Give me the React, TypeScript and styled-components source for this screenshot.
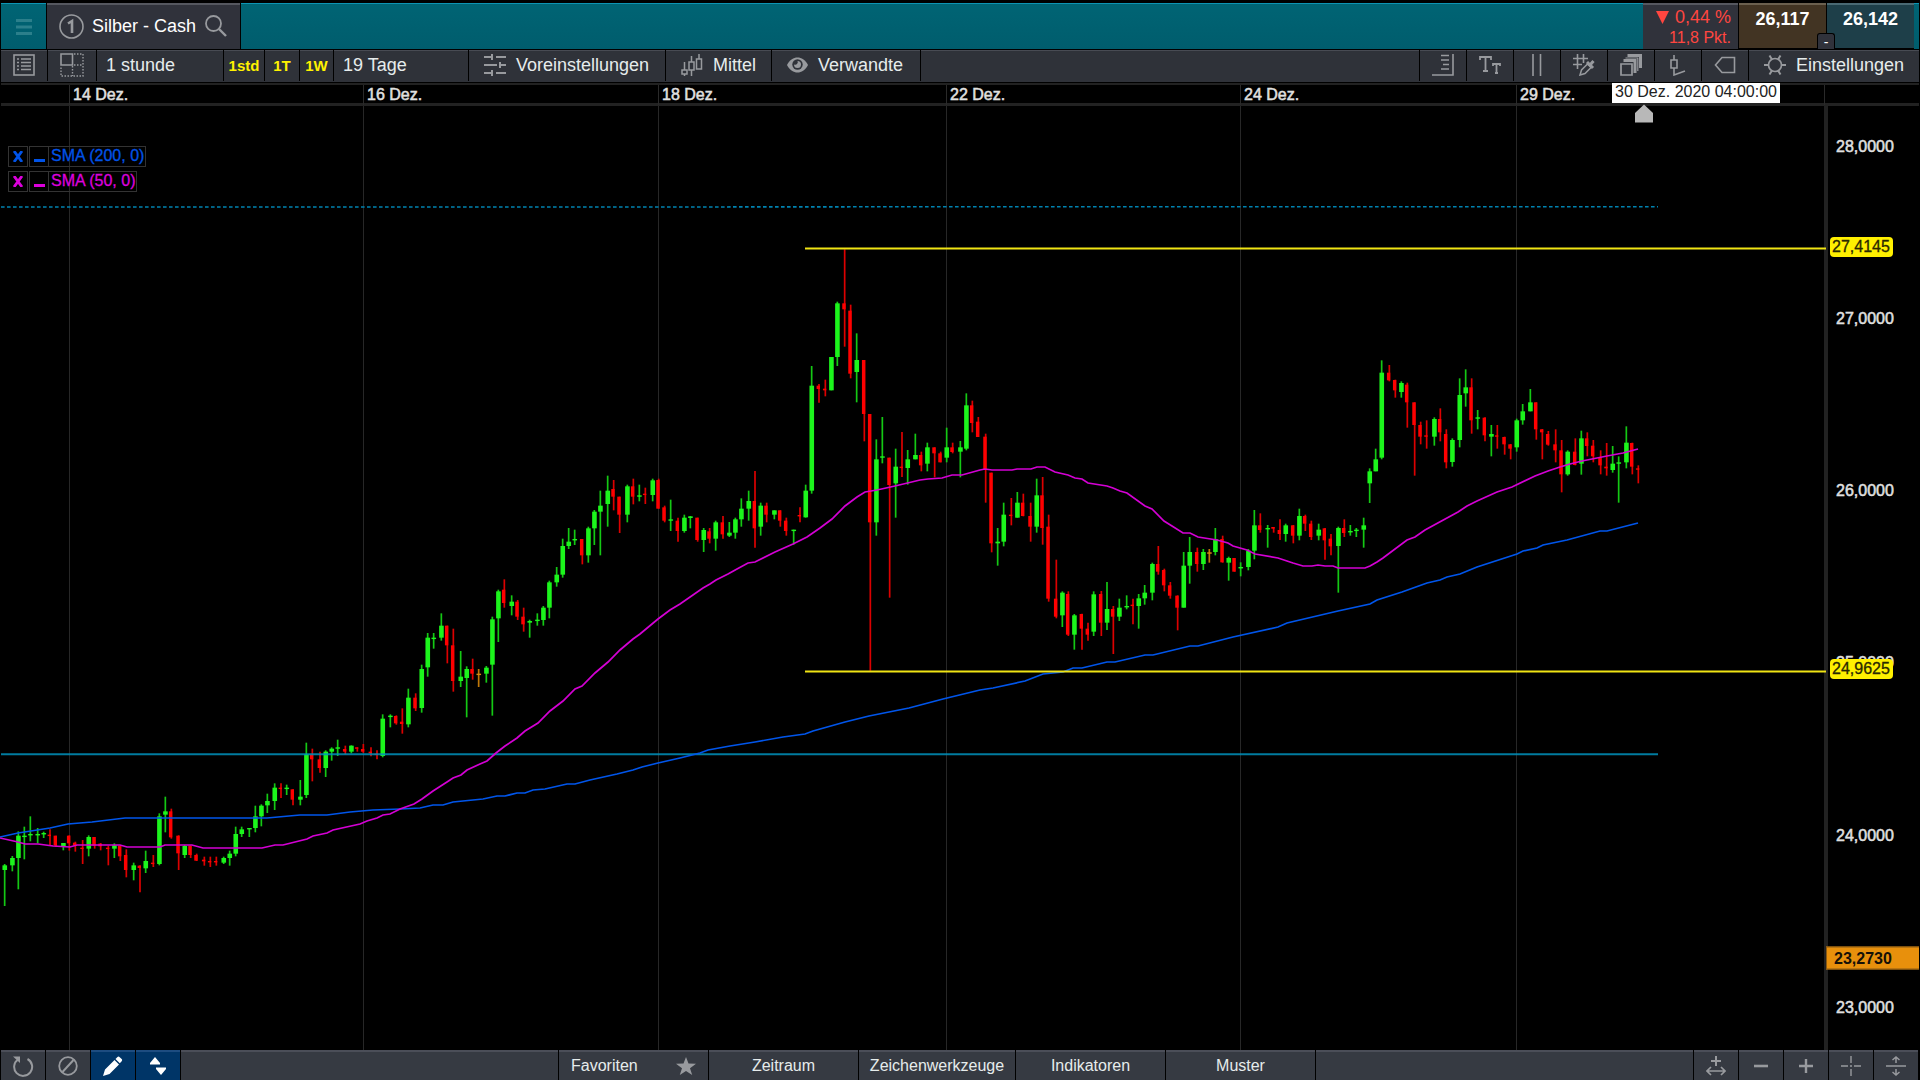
import React from "react";
import styled, { createGlobalStyle } from "styled-components";

const GlobalStyle = createGlobalStyle`
  * { box-sizing: border-box; }
  body { margin: 0; background: #000; }
  button, select { font: inherit; color: inherit; }
`;

const Screen = styled.div`
  display: flex;
  flex-direction: column;
  height: 100vh;
  padding: 0 1px;
  background: #000;
  color: #e6ecec;
  font-family: "Liberation Sans", Arial, sans-serif;
  font-size: 18px;
`;

/* ---------- header ---------- */

const Header = styled.header`
  display: flex;
  height: 49px;
  padding-top: 3px;
  background: #000;
`;

const HeaderFill = styled.div<{ $width?: number }>`
  flex: ${(p) => (p.$width ? `0 0 ${p.$width}px` : "1")};
  border-top: 1px solid #0d94b4;
  background: linear-gradient(#006474, #005d6d);
`;

const MenuButton = styled.button`
  flex: 0 0 45px;
  display: flex;
  align-items: center;
  justify-content: center;
  border: 0;
  border-top: 1px solid #0d94b4;
  padding: 0;
  background: linear-gradient(#006474, #005d6d);
`;

const Tab = styled.div`
  display: flex;
  align-items: center;
  gap: 8px;
  flex: 0 0 195px;
  padding: 0 13px 0 12px;
  border: solid #000;
  border-width: 0 1px;
  background: #30323b;
  box-shadow: inset 0 2px #55575f;
  color: #fff;
`;

const TabTitle = styled.h1`
  margin: 0;
  flex: 1;
  font-size: 18px;
  font-weight: 400;
  white-space: nowrap;
`;

const BareButton = styled.button`
  display: flex;
  padding: 0;
  border: 0;
  background: none;
`;

const Change = styled.div`
  flex: 0 0 95px;
  display: flex;
  flex-direction: column;
  align-items: flex-end;
  gap: 1px;
  padding: 4px 7px 0 0;
  background: #30323b;
  box-shadow: inset 0 2px #55575f;
  color: #ff4640;
  line-height: 20px;
`;

const ChangeRow = styled.span<{ $small?: boolean }>`
  display: flex;
  align-items: center;
  gap: 6px;
  font-size: ${(p) => (p.$small ? 16 : 18)}px;
`;

const Quotes = styled.div`
  position: relative;
  display: flex;
  gap: 1px;
  flex: 0 0 176px;
  padding: 0 0 1px 1px;
  background: #000;
`;

const Quote = styled.button<{ $tone: string; $edge: string }>`
  flex: 1;
  padding: 0 0 12px;
  border: 0;
  background: ${(p) => p.$tone};
  box-shadow: inset 0 2px ${(p) => p.$edge};
  color: #fff;
  font-weight: 700;
`;

const Spread = styled.span`
  position: absolute;
  left: 50%;
  bottom: 0;
  width: 18px;
  height: 16px;
  margin-left: -9px;
  border: 1px solid #000;
  border-bottom: 0;
  border-radius: 3px 3px 0 0;
  background: #30323b;
  color: #fff;
  font-size: 14px;
  line-height: 17px;
  text-align: center;
`;

/* ---------- toolbar ---------- */

const Toolbar = styled.nav`
  display: flex;
  height: 33px;
  margin-top: 1px;
  border-bottom: 1px solid #000;
  background: #2f3239;
  box-shadow: inset 0 1px #484b53;
`;

const Tool = styled.button<{ $width: number; $side?: "left" | "right" }>`
  flex: 0 0 ${(p) => p.$width}px;
  display: flex;
  align-items: center;
  gap: 10px;
  height: 31px;
  padding: 0 15px 1px;
  border: 0 solid #000;
  border-${(p) => p.$side ?? "right"}-width: 1px;
  background: none;
  white-space: nowrap;
`;

const IconTool = styled(Tool)`
  justify-content: center;
  padding: 0 0 2px;
`;

const Shortcut = styled(IconTool)`
  padding: 0;
  color: #fff200;
  font-size: 15px;
  font-weight: 700;
`;

const Picker = styled.select<{ $width: number }>`
  flex: 0 0 ${(p) => p.$width}px;
  height: 31px;
  padding: 0 9px 2px;
  border: 0 solid #000;
  border-right-width: 1px;
  border-radius: 0;
  background: none;
  appearance: none;
`;

const Spacer = styled.div`
  flex: 1;
`;

/* ---------- chart ---------- */

const DateRow = styled.div`
  position: relative;
  display: grid;
  grid-template-columns: 68fr 294fr 295fr 288fr 294fr 276fr 308fr 95px;
  height: 23px;
  border: solid #222;
  border-width: 2px 0 3px;
  color: #e0e0e0;
  font-size: 16px;
  line-height: 20px;
`;

const DateCell = styled.div`
  padding-left: 3px;
  white-space: nowrap;
  -webkit-text-stroke: 0.5px #e0e0e0;
  & + & {
    border-left: 1px solid #2a2a2a;
  }
`;

const DateFlag = styled.time`
  position: absolute;
  z-index: 1;
  top: -2px;
  right: 139px;
  width: 168px;
  height: 20px;
  background: #fff;
  color: #222;
  line-height: 18px;
  text-align: center;
`;

const ChartArea = styled.main`
  flex: 1;
  min-height: 0;
  display: grid;
  grid-template: minmax(0, 1fr) / minmax(0, 1fr) 91px;
`;

const Plot = styled.section`
  position: relative;
  border-right: 4px solid #222;
`;

const Drawing = styled.svg`
  display: block;
  width: 100%;
  height: 100%;
  overflow: visible;
`;

const Legend = styled.ul`
  position: absolute;
  top: 40px;
  left: 7px;
  display: flex;
  flex-direction: column;
  align-items: flex-start;
  gap: 4px;
  margin: 0;
  padding: 0;
  list-style: none;
  font-size: 16px;
`;

const LegendItem = styled.li<{ $color: string }>`
  display: flex;
  height: 21px;
  color: ${(p) => p.$color};
`;

const LegendButton = styled.button`
  display: flex;
  align-items: center;
  justify-content: center;
  width: 20px;
  margin-right: 1px;
  padding: 0;
  border: 1px solid #333;
  background: none;
  & + & {
    margin-right: -1px;
  }
`;

const LegendName = styled.span`
  padding: 0 1px 0 2px;
  border: 1px solid #333;
  line-height: 18px;
  -webkit-text-stroke: 0.3px currentColor;
`;

const PriceAxis = styled.aside`
  position: relative;
  font-size: 16px;
  color: #e0e0e0;
`;

const PriceLabel = styled.span`
  position: absolute;
  left: 8px;
  line-height: 20px;
  transform: translateY(-50%);
  -webkit-text-stroke: 0.5px #e0e0e0;
`;

const LevelTag = styled.span`
  position: absolute;
  left: 2px;
  margin-top: -1px;
  padding: 0 3px 0 2px;
  border-radius: 4px;
  background: #fff000;
  color: #2a2800;
  line-height: 20px;
  transform: translateY(-50%);
  -webkit-text-stroke: 0.3px #2a2800;
`;

const LastPriceTag = styled.span`
  position: absolute;
  left: -2px;
  right: 0;
  margin-top: -3px;
  padding-left: 7px;
  border: 1px solid #8a5a14;
  border-right: 0;
  background: #e8900c;
  color: #151008;
  font-weight: 700;
  line-height: 21px;
  transform: translateY(-50%);
`;

/* ---------- footer ---------- */

const Footer = styled.footer`
  display: flex;
  height: 30px;
  background: #363a42;
  box-shadow: inset 0 2px #4b4e58;
  font-size: 16px;
`;

const FootIcon = styled.button<{ $active?: boolean }>`
  flex: 0 0 45px;
  display: flex;
  align-items: center;
  justify-content: center;
  padding: 2px 0 0;
  border: 0;
  border-right: 1px solid #000;
  background: ${(p) => (p.$active ? "#003567" : "none")};
  box-shadow: ${(p) => (p.$active ? "inset 0 2px #1d4c80" : "none")};
`;

const FootGroup = styled.div`
  display: flex;
  border-left: 1px solid #000;
`;

const FootTab = styled.button<{ $wide?: boolean; $spread?: boolean }>`
  display: flex;
  align-items: center;
  justify-content: ${(p) => (p.$spread ? "space-between" : "center")};
  width: ${(p) => (p.$wide ? 157 : 150)}px;
  padding: 2px 12px 0;
  border: 0;
  border-right: 1px solid #000;
  background: none;
`;

/* ---------- icons ---------- */

const Glyph = styled.svg`
  flex: none;
  display: block;
  fill: none;
  stroke: #989a9e;
  stroke-width: 2;
`;

const MenuIcon = () => (
  <Glyph width="16" height="16" viewBox="0 0 16 16">
    <path d="M0 1.500h16M0 8h16M0 14.500h16" strokeWidth="3" stroke="#2b7f8b" />
  </Glyph>
);
const OneIcon = () => (
  <Glyph width="25" height="25" viewBox="0 0 25 25">
    <circle cx="12.500" cy="12.500" r="11.500" strokeWidth="1.600" />
    <path d="M9 9.500 13 7v12" strokeWidth="2.600" />
  </Glyph>
);
const SearchIcon = () => (
  <Glyph width="22" height="22" viewBox="0 0 22 22">
    <circle cx="8.500" cy="8.500" r="7.500" strokeWidth="1.800" />
    <path d="m14 14 7 7" strokeWidth="2.400" />
  </Glyph>
);
const ListIcon = () => (
  <Glyph width="22" height="22" viewBox="0 0 22 22">
    <rect x="1" y="1" width="20" height="20" strokeWidth="1.600" />
    <path d="M4 5h2M4 8.500h2M4 12h2M4 15.500h2M8 5h10M8 8.500h10M8 12h10M8 15.500h10" strokeWidth="1.500" />
  </Glyph>
);
const GridIcon = () => (
  <Glyph width="24" height="24" viewBox="0 0 24 24">
    <path d="M1 1h11.500v11H1z" strokeWidth="1.600" />
    <path d="M14 1h9v22H1V13M12.500 13v10M14 12h9" strokeWidth="1.400" strokeDasharray="1.500 1.500" />
  </Glyph>
);
const SlidersIcon = () => (
  <Glyph width="22" height="22" viewBox="0 0 22 22">
    <path d="M0 3h9M12 3h10M8 0v6M0 11h13M16 11h6M16 8v6M0 19h9M12 19h10M8 16v6" />
  </Glyph>
);
const CandlesIcon = () => (
  <Glyph width="22" height="22" viewBox="0 0 22 22">
    <path d="M3.500 8v8M1 16h5v4H1zM3.500 20v2M10.500 2v6M8 8h5v8H8zM10.500 16v6M18 0v5M15.500 5h5v10h-5z" strokeWidth="1.500" />
  </Glyph>
);
const EyeIcon = () => (
  <Glyph width="21" height="16" viewBox="0 0 21 16">
    <path d="M0 8C3 2.500 6.500.5 10.500.5S18 2.500 21 8c-3 5.500-6.500 7.500-10.500 7.500S3 13.500 0 8z" fill="#989a9e" stroke="none" />
    <circle cx="10.500" cy="7.500" r="5.200" fill="#2f3239" stroke="none" />
    <path d="M10.500 4a3.500 3.500 0 1 1-3.500 3.500 2.600 2.600 0 0 0 3.500-3.500z" fill="#989a9e" stroke="none" />
  </Glyph>
);
const ScaleIcon = () => (
  <Glyph width="22" height="22" viewBox="0 0 22 22">
    <path d="M0 21h21V0M9 1.500h8M9 6h8M11 10.500h6M9 15h8" strokeWidth="1.600" />
  </Glyph>
);
const TextIcon = () => (
  <Glyph width="22" height="20" viewBox="0 0 22 20">
    <path d="M1 5V2h11v3M6.500 2v14M4 16h5M14 11V9h7v2M17.500 9v9M16 18h3" strokeWidth="1.800" />
  </Glyph>
);
const BarsIcon = () => (
  <Glyph width="10" height="22" viewBox="0 0 10 22">
    <path d="M1 0v22M8.500 0v22" strokeWidth="1.600" />
  </Glyph>
);
const GridPenIcon = () => (
  <Glyph width="22" height="22" viewBox="0 0 22 22">
    <path d="M4.500 0v15M10.500 0v9M0 4.500h15M0 10.500h9" strokeWidth="1.600" />
    <path d="m7 21 1.500-5 6-6 3.500 3.500-6 6z" strokeWidth="1.500" />
    <path d="m14 8 6 6M17 11l3.500-4" strokeWidth="3" />
  </Glyph>
);
const LayersIcon = () => (
  <Glyph width="22" height="22" viewBox="0 0 22 22">
    <path d="M1 10h11v11H1z" strokeWidth="1.700" />
    <path d="M3.500 6.500h11.500V19M7.500 1.500h13V14" strokeWidth="3" />
    <path d="M5.500 4h12.300V17" strokeWidth="1.200" />
  </Glyph>
);
const CandleAxisIcon = () => (
  <Glyph width="16" height="22" viewBox="0 0 16 22">
    <path d="M4 1v5M1 6h6v8H1zM4 14v7l11-4" strokeWidth="1.600" />
  </Glyph>
);
const TagIcon = () => (
  <Glyph width="22" height="18" viewBox="0 0 22 18">
    <path d="M8 1.500h12.500v15H8L1.500 9z" strokeWidth="1.600" />
  </Glyph>
);
const GearIcon = () => (
  <Glyph width="22" height="22" viewBox="0 0 22 22">
    <circle cx="11" cy="11" r="6.500" strokeWidth="1.700" />
    <path d="M0 11h4M18 11h4M5.500 1.500 8 5.500M16.500 1.500 14 5.500M5.500 20.500 8 16.500M16.500 20.500 14 16.500" />
  </Glyph>
);
const ResetIcon = () => (
  <Glyph width="22" height="22" viewBox="0 0 22 22">
    <path d="M6 4.500A9 9 0 1 0 15.500 4" />
    <path d="M1 1.500h7v6.500z" fill="#989a9e" stroke="none" />
  </Glyph>
);
const BanIcon = () => (
  <Glyph width="20" height="20" viewBox="0 0 20 20">
    <circle cx="10" cy="10" r="8.800" strokeWidth="1.800" />
    <path d="M15.500 4 4.500 16" />
  </Glyph>
);
const PencilIcon = () => (
  <Glyph width="20" height="20" viewBox="0 0 20 20">
    <path d="m0 20 2-6.500L11.500 4l4.500 4.500L6.500 18zM12.500 3l2-2q1-1 2.500.5L18.700 3q1 1 0 2.200l-1.900 2z" fill="#fff" stroke="none" />
  </Glyph>
);
const UpDownIcon = () => (
  <Glyph width="16" height="18" viewBox="0 0 16 18">
    <path d="M0 6 5 0l5 6v1.500H0zM6 10.500h10V12l-5 6-5-6z" fill="#fff" stroke="none" />
  </Glyph>
);
const StarIcon = () => (
  <Glyph width="20" height="18" viewBox="0 0 20 18">
    <path d="m10 0 2.500 6.500 7.500.3-6 4.500L16.200 18 10 14l-6.200 4L6 11.300 0 6.800l7.500-.3z" fill="#989a9e" stroke="none" />
  </Glyph>
);
const StretchIcon = () => (
  <Glyph width="20" height="20" viewBox="0 0 20 20">
    <path d="M10 0v10M5 5h10" />
    <path d="M1 15h18M5 11l-4 4 4 4M15 11l4 4-4 4" strokeWidth="1.700" />
  </Glyph>
);
const MinusIcon = () => (
  <Glyph width="14" height="14" viewBox="0 0 14 14">
    <path d="M0 7h14" strokeWidth="2.600" />
  </Glyph>
);
const PlusIcon = () => (
  <Glyph width="14" height="14" viewBox="0 0 14 14">
    <path d="M0 7h14M7 0v14" strokeWidth="2.400" />
  </Glyph>
);
const CrossIcon = () => (
  <Glyph width="20" height="20" viewBox="0 0 20 20">
    <path d="M0 10h7M13 10h7M10 0v7M10 13v7M9 10h2" strokeWidth="1.400" />
  </Glyph>
);
const SplitIcon = () => (
  <Glyph width="20" height="20" viewBox="0 0 20 20">
    <path d="M0 10h20M10 7V1M6.500 4 10 1l3.500 3M10 13v6M6.500 16l3.500 3 3.500-3" strokeWidth="1.500" />
  </Glyph>
);

/* ---------- market data ---------- */

const TOP = 106;
const WIDTH = 1823;
const HEIGHT = 944;

// Each block: horizontal base, vertical base, then rows of
// "kind time high low bodyTop bodyBottom" in thirds of a chart unit.
const blocks: [number, number, string][] = [
  [0, 580, `G 14 852 978 856 870;G 37 828 874 834 856;G 55 754 928 767 834;G 73 740 838 767 770;G 91 709 784 762 765;G 113 744 790 762 765;G 131 755 774 759 763;R 150 748 796 764 766;R 168 767 800 767 797;G 190 789 811 789 799;R 208 766 812 767 790;R 226 785 815 788 797;R 248 780 852 803 806;G 266 766 829 771 806;R 284 771 806 771 797;R 302 789 811 791 799;R 325 797 856 803 806;G 343 790 834 796 806;R 361 797 843 797 829;R 379 808 892 825 870;G 401 848 901 856 870;R 420 856 937 857 864;G 437 812 879 843 865;R 460 825 861 848 852;G 478 700 856 709 852;G 496 650 757 694 704;R 514 686 776 694 772;R 536 766 870 767 820;G 554 795 834 798 825;R 572 797 834 797 825;R 590 821 843 825 842;R 613 830 857 839 844;R 631 830 861 843 847;R 649 830 857 843 846;G 671 830 852 834 848;G 689 812 857 821 834;G 707 740 829 762 821;G 725 740 771 748 762;G 748 744 771 744 748;G 766 677 757 709 744;G 784 673 739 677 709;G 802 641 699 663 676;G 824 610 690 623 663;R 843 610 654 623 626;G 860 614 645 623 627;R 879 628 676 628 659;G 901 600 676 650 659;G 919 488 654 523 645;R 937 506 604 524 538;R 960 515 578 538 564;G 977 511 591 515 564;G 995 502 542 506 515;G 1013 479 528 502 506;R 1036 497 523 507 515;G 1054 496 520 497 515;R 1072 502 515 502 505;R 1090 492 519 507 515;R 1113 502 529 515 520;R 1131 511 538 521 524;G 1148 403 532 416 528;G 1171 403 442 407 411;R 1189 406 434 408 430;R 1207 385 461 425 432;G 1225 326 442 353 433;R 1247 340 393 353 385`],
  [380, 440, `G 125 674 818 687 804;G 143 579 710 593 682;G 161 579 626 593 597;G 184 520 602 557 593;R 202 557 670 557 616;R 220 566 755 616 723;G 242 633 741 710 723;G 260 679 832 687 714;R 278 656 719 687 701;O 296 687 741 701 705;G 319 678 728 683 701;G 337 530 827 538 674;G 355 449 606 454 535;R 373 418 503 449 489;G 395 466 526 485 498;R 413 480 540 485 530;R 431 503 575 530 553;G 449 539 593 543 548;G 472 520 557 539 543;G 490 498 557 503 540;G 508 422 535 427 503;G 530 381 440 404 427;G 548 296 413 318 404;G 566 264 327 305 318;G 584 269 315 297 301;R 607 297 373 297 346;G 625 260 368 265 346;G 643 210 315 215 265;G 661 152 346 197 215;G 683 107 260 152 192;R 701 120 211 147 170;R 719 170 279 170 224;G 742 134 247 139 224;R 760 116 193 139 170;G 778 134 184 166 170;R 796 143 192 161 165;G 818 116 184 121 165;R 836 116 206 120 206;R 854 197 247 202 242;G 872 179 273 238 241;R 894 233 305 242 273;G 913 224 278 233 273;G 931 228 265 229 234;R 953 233 305 233 300;G 971 264 336 270 300;R 989 264 310 274 296;G 1007 242 332 247 296;R 1029 228 296 247 283;G 1048 246 291 278 287;G 1066 233 296 238 278;G 1084 175 260 206 238;G 1106 152 242 183 206;R 1125 93 323 183 265;G 1142 188 287 197 260;R 1160 188 247 197 224;G 1183 211 238 211 224;R 1201 211 260 211 242;R 1219 233 287 242 273;G 1241 269 314 269 273;R 1260 202 247 225 229;G 1277 134 233 152 232`],
  [780, 230, `G 95 408 791 467 782;R 117 462 518 467 477;R 136 449 499 476 481;G 154 381 481 381 481;G 172 215 408 220 381;R 194 58 350 220 238;R 212 224 445 242 431;G 230 310 517 390 426;R 253 390 634 390 552;R 271 552 1322 552 877;G 289 628 917 688 877;G 307 561 700 679 683;R 329 683 1103 683 765;G 347 656 863 710 760;R 366 606 741 710 714;G 383 660 764 688 714;G 406 611 688 675 688;R 424 665 724 675 706;G 442 638 724 652 701;R 464 652 742 652 670;R 482 665 697 670 697;G 500 593 697 652 683;R 518 638 670 652 666;G 541 633 742 652 665;G 559 490 661 526 656;R 577 512 607 526 579;R 595 561 621 575 621;R 617 611 818 620 720;R 635 728 967 728 940;G 653 894 1007 935 940;G 671 818 949 854 935;R 694 804 886 854 858;G 712 786 863 818 863;R 730 791 859 818 858;R 752 818 935 858 890;G 770 746 908 796 890;R 788 741 944 796 894;R 806 854 1115 890 1106;R 829 989 1165 1106 1160;G 847 1084 1191 1088 1156;R 865 1084 1218 1092 1214;G 883 1152 1259 1156 1214;R 906 1151 1259 1152 1196;R 924 1178 1232 1196 1214;G 941 1084 1218 1093 1205`],
  [1000, 440, `R 304 453 588 462 548;G 321 426 570 507 548;R 340 498 642 507 530;G 358 476 543 503 530;G 380 466 508 498 502;R 399 476 553 494 498;G 416 462 566 475 498;G 434 435 494 458 475;G 457 368 481 372 458;R 475 318 404 372 395;R 493 386 454 390 436;R 511 426 476 436 467;R 533 466 571 467 503;G 551 336 503 377 503;G 569 291 431 336 377;R 592 323 395 336 372;G 610 327 390 336 372;O 628 327 368 337 341;G 646 264 346 297 336;R 668 287 368 297 367;G 686 350 422 354 368;R 704 354 395 354 395;G 722 367 409 381 385;G 745 327 391 332 381;G 763 210 358 256 332;R 781 220 278 256 270;G 803 255 323 264 268;R 821 261 278 261 266;R 840 238 300 270 282;G 857 251 305 256 282;R 880 255 310 256 287;G 898 206 301 228 287;R 916 224 273 228 251;R 934 242 300 251 291;G 956 251 301 269 287;R 975 264 359 265 301;R 993 282 346 296 319;G 1015 260 458 264 318;R 1033 238 291 264 279;G 1051 255 287 273 277;G 1069 264 291 269 273;G 1091 233 323 256 269`],
  [1340, 340, `G 89 385 489 394 430;G 107 326 394 358 394;G 125 61 358 98 353;R 148 75 124 98 121;R 166 119 173 120 151;G 184 124 173 129 156;R 202 128 263 134 187;R 224 187 407 187 255;R 242 245 313 255 290;R 260 241 326 286 290;G 283 232 317 237 290;R 301 205 304 237 277;R 319 268 385 282 367;G 337 295 380 300 366;G 359 115 322 165 300;G 377 88 200 142 160;R 395 115 281 142 241;G 413 210 268 232 236;R 435 232 304 233 286;G 454 255 349 282 290;R 472 255 326 286 290;R 494 290 344 291 313;R 512 312 358 313 326;G 530 236 335 241 322;G 548 192 254 214 241;G 571 147 214 187 214;R 589 187 299 187 268;R 607 267 358 268 277;R 625 273 317 282 314;R 647 268 367 313 331;R 665 300 457 331 403;G 683 331 407 335 403;R 706 295 376 335 375;G 724 272 404 295 371;R 742 277 349 295 318;R 760 300 367 317 349;R 782 331 403 352 376;R 800 309 407 380 385;G 818 318 398 371 390;G 836 349 488 367 371;G 859 259 385 308 367;R 877 308 403 309 380;R 895 376 430 385 388`],
];

type Kind = "G" | "R" | "O";
interface CandleData { kind: Kind; x: number; high: number; low: number; top: number; bottom: number; }

const candles: CandleData[] = blocks.flatMap(([bx, by, rows]) =>
  rows.split(";").map((row) => {
    const [kind, ...n] = row.split(" ");
    const [x, high, low, top, bottom] = n.map(Number);
    const y = (v: number) => by + v / 3;
    return { kind: kind as Kind, x: bx + x / 3, high: y(high), low: y(low), top: y(top), bottom: y(bottom) };
  }),
);

const bodyColor: Record<Kind, string> = { G: "#1cf51c", R: "#ff0000", O: "#d88a10" };
const wickColor: Record<Kind, string> = { G: "#14c814", R: "#dc0000", O: "#c07808" };

const Candle = ({ kind, x, high, low, top, bottom }: CandleData) => {
  const left = kind === "R" ? x - 2.4 : x - 2.2;
  const width = kind === "R" ? 3.4 : 4.6;
  return (
    <g>
      <path d={`M${x} ${high}V${low}`} stroke={wickColor[kind]} strokeWidth="1.700" />
      <rect x={left} y={top} width={width} height={Math.max(1.4, bottom - top)} fill={bodyColor[kind]} />
    </g>
  );
};

const sma200 =
  "0,837 18,833 50,828 68,824 92,822 125,818 267,818 300,815 327,815 350,812 373,810 400,809 420,808 433,805 443,805 453,802 463,801 483,799 497,796 505,796 517,793 525,793 533,790 545,789 567,784 575,784 590,780 617,774 633,770 642,767 658,763 680,758 700,753 708,750 730,746 755,742 783,737 805,734 813,731 845,722 869,716 909,708 943,699 980,690 993,688 1025,681 1043,674 1063,672 1073,668 1082,668 1107,662 1115,662 1145,655 1153,655 1190,646 1198,646 1233,637 1278,627 1287,623 1338,611 1370,604 1377,600 1402,592 1427,583 1440,580 1447,577 1460,574 1477,567 1517,554 1523,551 1537,548 1543,545 1567,540 1600,531 1607,531 1638,523";
const sma50 =
  "0,838 18,842 25,844 38,844 53,846 70,847 77,845 120,845 127,847 160,847 165,845 192,845 203,848 262,848 275,845 283,845 307,839 313,836 327,833 333,830 360,824 367,821 377,818 383,815 390,814 400,809 414,804 422,799 433,791 447,782 453,778 461,775 467,770 480,764 487,761 496,753 505,746 517,738 525,731 538,723 550,711 563,701 575,689 582,686 595,673 608,662 620,650 633,639 640,634 658,619 670,610 680,604 703,588 710,584 716,580 728,574 737,569 748,563 755,562 775,552 793,544 807,537 820,528 832,519 845,506 857,497 865,492 877,490 895,486 920,480 928,479 942,478 952,475 962,475 980,470 985,469 992,470 1012,470 1017,469 1031,469 1037,467 1045,467 1055,472 1068,475 1075,478 1082,479 1088,483 1107,486 1113,488 1120,491 1127,493 1145,506 1152,509 1164,521 1172,526 1183,533 1190,533 1198,537 1217,540 1228,543 1233,546 1247,550 1255,554 1278,558 1293,563 1303,566 1312,566 1318,565 1325,566 1333,566 1338,568 1365,568 1370,566 1377,562 1383,558 1407,540 1415,537 1425,530 1458,512 1467,506 1477,501 1497,492 1512,487 1535,476 1548,471 1560,467 1570,464 1582,461 1607,456 1623,453 1638,449";

const gridLines = [69, 363, 658, 946, 1240, 1516];
const pricePosition = (price: number) => `${((146.7 - TOP + (28 - price) * 172.2) / HEIGHT) * 100}%`;
const format = (price: number) => price.toFixed(4).replace(".", ",");

const indicators = [
  { name: "SMA (200, 0)", color: "#0053e8" },
  { name: "SMA (50, 0)", color: "#dc00dc" },
];

const rightTools: [string, React.ReactNode][] = [
  ["Skala", <ScaleIcon />],
  ["Text", <TextIcon />],
  ["Linien", <BarsIcon />],
  ["Raster", <GridPenIcon />],
  ["Ebenen", <LayersIcon />],
  ["Kerzen", <CandleAxisIcon />],
  ["Etikett", <TagIcon />],
];

const footRight: [string, React.ReactNode][] = [
  ["Strecken", <StretchIcon />],
  ["Verkleinern", <MinusIcon />],
  ["Vergrößern", <PlusIcon />],
  ["Fadenkreuz", <CrossIcon />],
  ["Teilen", <SplitIcon />],
];

export default function App() {
  return (
    <Screen>
      <GlobalStyle />
      <Header>
        <MenuButton aria-label="Menü"><MenuIcon /></MenuButton>
        <Tab>
          <OneIcon />
          <TabTitle>Silber - Cash</TabTitle>
          <BareButton aria-label="Suchen"><SearchIcon /></BareButton>
        </Tab>
        <HeaderFill />
        <Change>
          <ChangeRow>
            <svg width="13" height="13" viewBox="0 0 13 13"><path d="M0 0h13L6.500 13z" fill="#ff4640" /></svg>
            0,44 %
          </ChangeRow>
          <ChangeRow $small>11,8 Pkt.</ChangeRow>
        </Change>
        <Quotes>
          <Quote $tone="#423423" $edge="#6b604f">26,117</Quote>
          <Quote $tone="#1e3f49" $edge="#4a6973">26,142</Quote>
          <Spread>-</Spread>
        </Quotes>
        <HeaderFill $width={5} />
      </Header>

      <Toolbar>
        <IconTool $width={47} aria-label="Liste"><ListIcon /></IconTool>
        <IconTool $width={49} aria-label="Layout"><GridIcon /></IconTool>
        <Picker $width={127} aria-label="Intervall"><option>1 stunde</option></Picker>
        <Shortcut $width={41}>1std</Shortcut>
        <Shortcut $width={35}>1T</Shortcut>
        <Shortcut $width={34}>1W</Shortcut>
        <Picker $width={135} aria-label="Zeitspanne"><option>19 Tage</option></Picker>
        <Tool $width={197}><SlidersIcon />Voreinstellungen</Tool>
        <Tool $width={106}><CandlesIcon />Mittel</Tool>
        <Tool $width={149}><EyeIcon />Verwandte</Tool>
        <Spacer />
        {rightTools.map(([label, icon]) => (
          <IconTool key={label} $width={47} $side="left" aria-label={label}>{icon}</IconTool>
        ))}
        <Tool $width={171} $side="left"><GearIcon />Einstellungen</Tool>
      </Toolbar>

      <DateRow>
        <DateCell />
        {["14", "16", "18", "22", "24", "29"].map((day) => (
          <DateCell key={day}>{day} Dez.</DateCell>
        ))}
        <DateCell />
        <DateFlag>30 Dez. 2020 04:00:00</DateFlag>
      </DateRow>

      <ChartArea>
        <Plot>
          <Drawing viewBox={`1 ${TOP} ${WIDTH} ${HEIGHT}`} preserveAspectRatio="none" aria-label="Kursverlauf">
            {gridLines.map((x) => (
              <rect key={x} x={x} y={TOP} width="1" height={HEIGHT} fill="#272727" />
            ))}
            <path d="M1 207H640L1000 206.700H1658" stroke="#0082b0" strokeWidth="1.600" strokeDasharray="3.600 2.400" fill="none" />
            {candles.map((c) => <Candle key={c.x} {...c} />)}
            <path d="M1 754.300H1658" stroke="#0090bb" strokeOpacity=".85" strokeWidth="2" />
            <polyline points={sma200} fill="none" stroke="#0055ea" strokeWidth="1.700" />
            <polyline points={sma50} fill="none" stroke="#d400d4" strokeWidth="1.700" />
            <path d="M805 248.500H1826M805 671.500H1826" stroke="#f0e414" strokeWidth="1.800" />
            <path d="M1644 104.500 1653 113V122.500H1635V113z" fill="#b8b8b8" />
          </Drawing>
          <Legend>
            {indicators.map(({ name, color }) => (
              <LegendItem key={name} $color={color}>
                <LegendButton aria-label={`${name} entfernen`}>
                  <svg width="10" height="11" viewBox="0 0 10 11"><path d="m1 0 8 11M9 0 1 11" stroke="currentColor" strokeWidth="2.800" /></svg>
                </LegendButton>
                <LegendButton aria-label={`${name} minimieren`}>
                  <svg width="11" height="11" viewBox="0 0 11 11"><path d="M0 9.500h11" stroke="currentColor" strokeWidth="3" /></svg>
                </LegendButton>
                <LegendName>{name}</LegendName>
              </LegendItem>
            ))}
          </Legend>
        </Plot>
        <PriceAxis>
          {[28, 27, 26, 25, 24, 23].map((p) => (
            <PriceLabel key={p} style={{ top: pricePosition(p) }}>{format(p)}</PriceLabel>
          ))}
          {[27.4145, 24.9625].map((p) => (
            <LevelTag key={p} style={{ top: pricePosition(p) }}>{format(p)}</LevelTag>
          ))}
          <LastPriceTag style={{ top: pricePosition(23.273) }}>{format(23.273)}</LastPriceTag>
        </PriceAxis>
      </ChartArea>

      <Footer>
        <FootIcon aria-label="Zurücksetzen"><ResetIcon /></FootIcon>
        <FootIcon aria-label="Ausblenden"><BanIcon /></FootIcon>
        <FootIcon $active aria-label="Zeichnen"><PencilIcon /></FootIcon>
        <FootIcon $active aria-label="Verschieben"><UpDownIcon /></FootIcon>
        <Spacer />
        <FootGroup>
          <FootTab $spread>Favoriten<StarIcon /></FootTab>
          <FootTab>Zeitraum</FootTab>
          <FootTab $wide>Zeichenwerkzeuge</FootTab>
          <FootTab>Indikatoren</FootTab>
          <FootTab>Muster</FootTab>
        </FootGroup>
        <Spacer />
        <FootGroup>
          {footRight.map(([label, icon]) => (
            <FootIcon key={label} aria-label={label}>{icon}</FootIcon>
          ))}
        </FootGroup>
      </Footer>
    </Screen>
  );
}
